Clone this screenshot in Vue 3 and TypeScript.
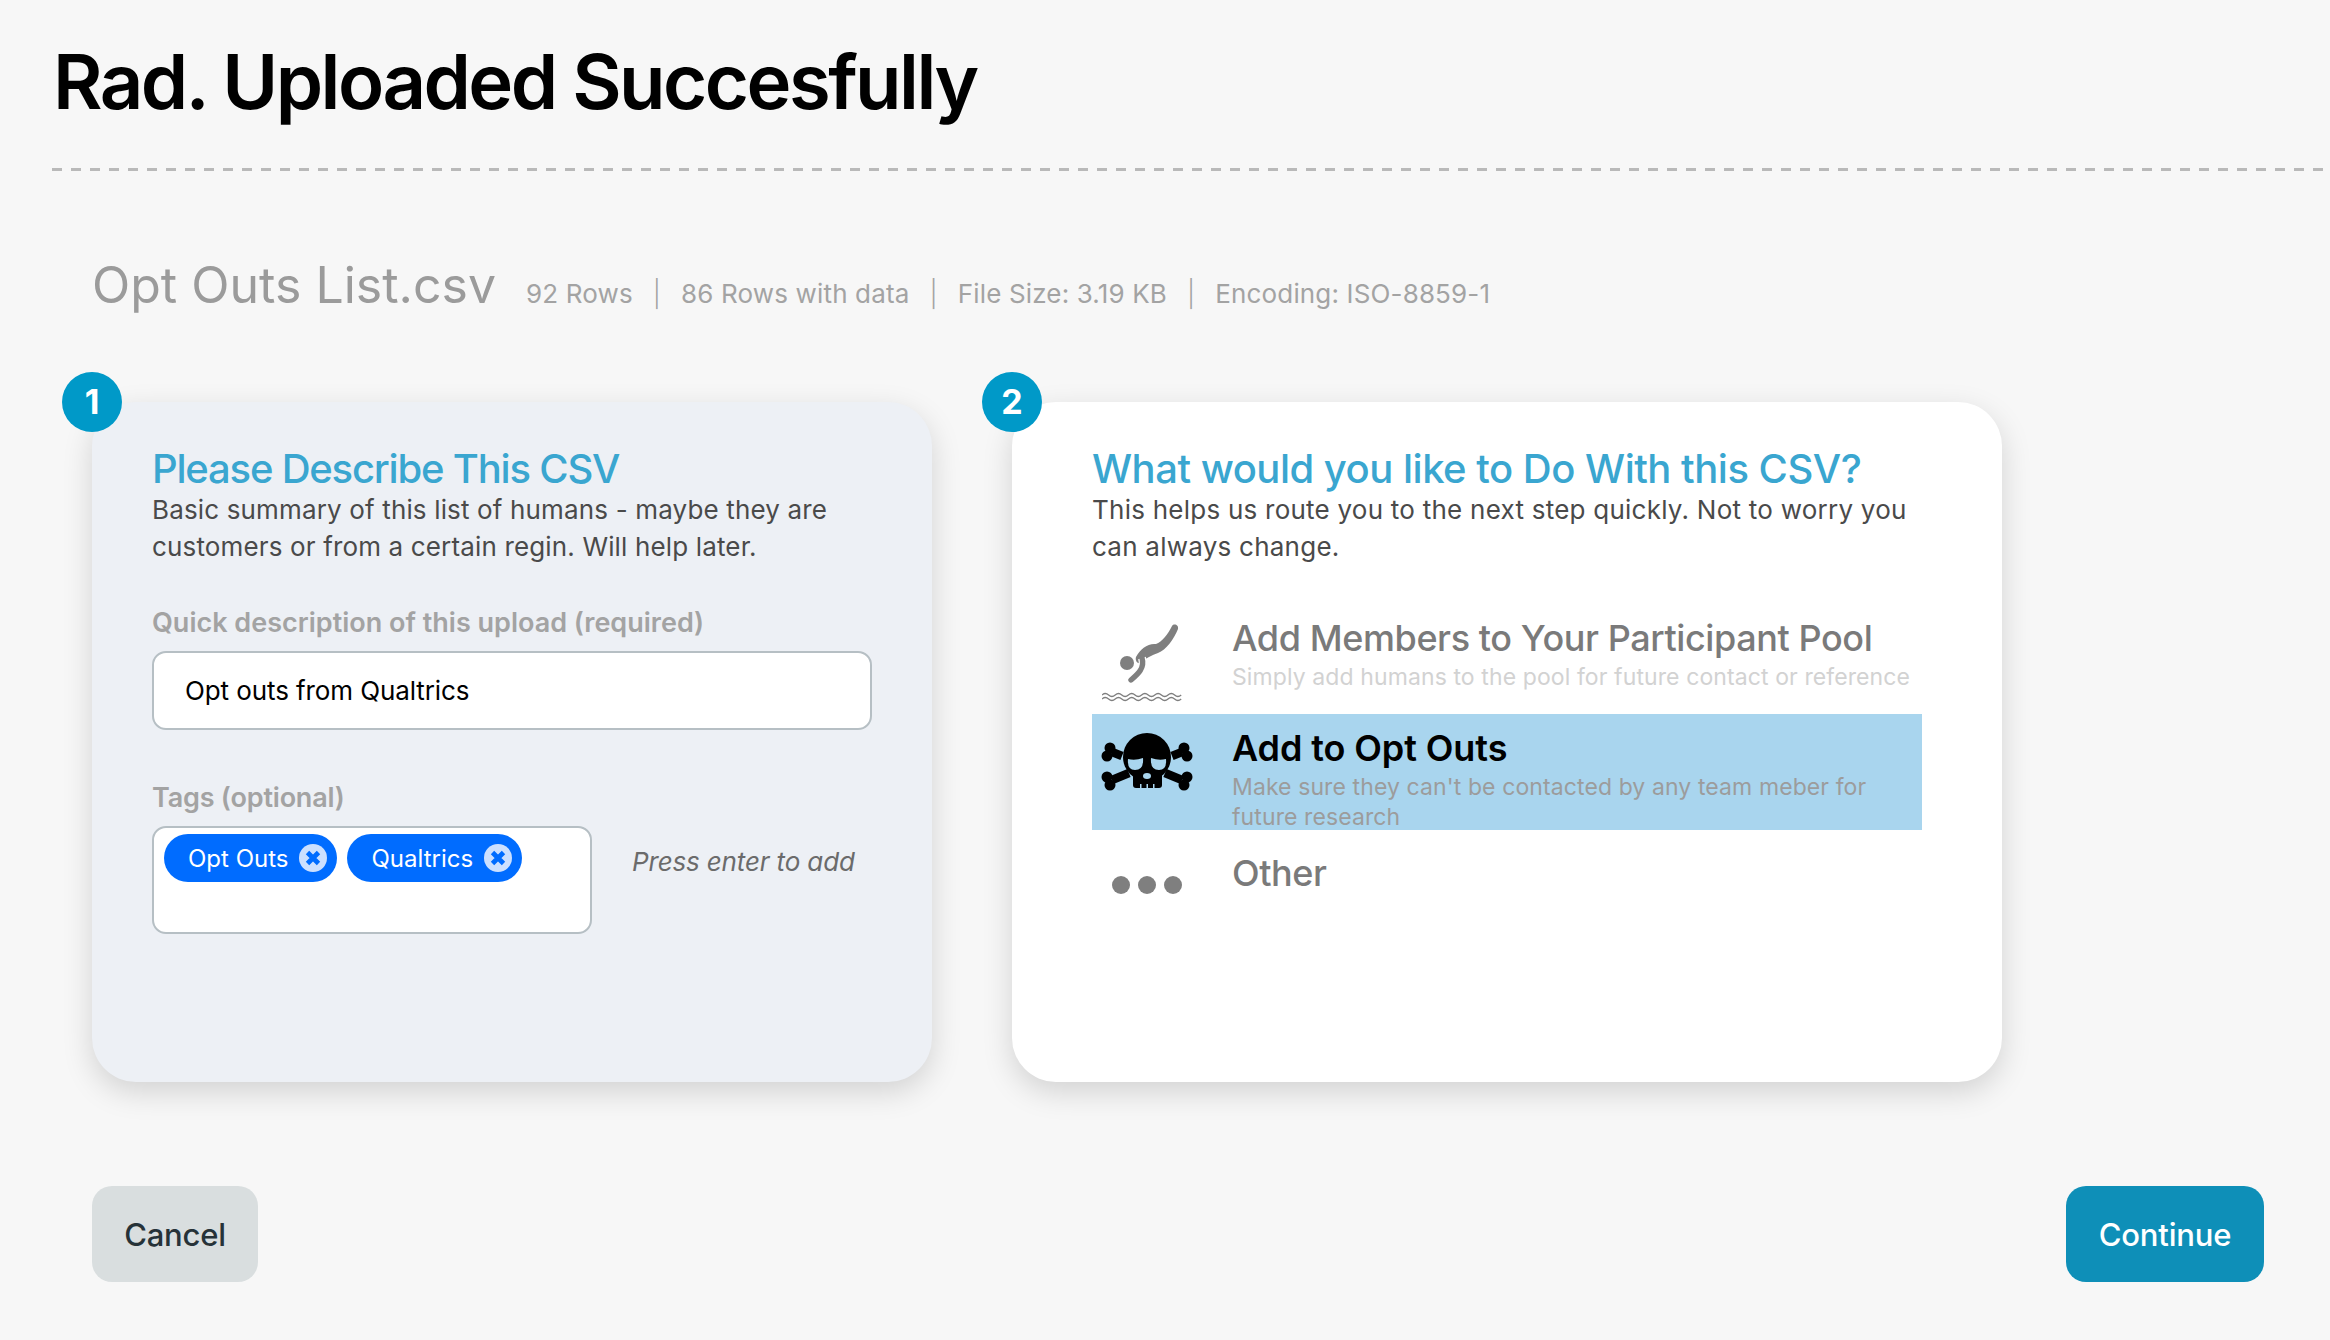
<template>
  <div class="page">
    <h1 class="title">Rad. Uploaded Succesfully</h1>
    <div class="rule"></div>

    <div class="file-row">
      <span class="file-name">Opt Outs List.csv</span>
      <div class="file-meta">
        <template v-for="(item, i) in fileStats" :key="item">
          <span v-if="i > 0" class="sep">|</span>
          <span>{{ item }}</span>
        </template>
      </div>
    </div>

    <div class="cards">
      <section class="card card-left">
        <span class="badge">1</span>
        <h2>Please Describe This CSV</h2>
        <p class="lead">Basic summary of this list of humans - maybe they are customers or from a certain regin. Will help later.</p>

        <label class="field-label">Quick description of this upload (required)</label>
        <input class="text-input" type="text" value="Opt outs from Qualtrics" />

        <label class="field-label tags-label">Tags (optional)</label>
        <div class="tags-row">
          <div class="tags-box">
            <span v-for="tag in tags" :key="tag" class="tag">
              {{ tag }}
              <svg class="tag-x" viewBox="0 0 28 28">
                <circle cx="14" cy="14" r="14" fill="#cce0ff" />
                <path d="M8.5 8.5l11 11M19.500 8.500l-11 11" stroke="#006cff" stroke-width="4.800" />
              </svg>
            </span>
          </div>
          <span class="hint">Press enter to add</span>
        </div>
      </section>

      <section class="card card-right">
        <span class="badge">2</span>
        <h2>What would you like to Do With this CSV?</h2>
        <p class="lead">This helps us route you to the next step quickly. Not to worry you can always change.</p>

        <div class="options">
          <div class="option option-pool">
            <div class="option-icon">
              <svg width="80" height="80" viewBox="0 0 80 80">
                <circle cx="25" cy="41" r="7" fill="#7f7f7f" />
                <path d="M70 4C66 12 60 20 54 22C46 21 38 27 34 35C33 38 35 42 38 41C44 36 50 33 56 31C64 28 72 17 76 7C77 3 72 1 70 4Z" fill="#7f7f7f" />
                <path d="M40 36C43 46 36 52 29 58" fill="none" stroke="#fff" stroke-width="8" />
                <path d="M40 36C43 46 36 52 29 58" fill="none" stroke="#7f7f7f" stroke-width="5.4" stroke-linecap="round" />
                <path d="M0 73q3.300-3 6.600 0t6.600 0t6.600 0t6.600 0t6.600 0t6.600 0t6.600 0t6.600 0t6.600 0t6.600 0t6.600 0t6.600 0" fill="none" stroke="#7f7f7f" stroke-width="1.300" />
                <path d="M0 77q3.300-3 6.600 0t6.600 0t6.600 0t6.600 0t6.600 0t6.600 0t6.600 0t6.600 0t6.600 0t6.600 0t6.600 0t6.600 0" fill="none" stroke="#7f7f7f" stroke-width="1.300" />
              </svg>
            </div>
            <div class="option-text">
              <div class="option-title">Add Members to Your Participant Pool</div>
              <div class="option-sub">Simply add humans to the pool for future contact or reference</div>
            </div>
          </div>

          <div class="option option-active">
            <div class="option-icon">
              <svg width="94" height="64" viewBox="0 0 94 64">
                <g fill="#000">
                  <circle cx="47" cy="27" r="24" />
                  <path d="M33 42H62V55Q62 58 59 58H36Q33 58 33 55Z" />
                  <path d="M12 22L22 26M12 50L29 43" stroke="#000" stroke-width="8.500" />
                  <circle cx="10" cy="18" r="5.500" /><circle cx="7" cy="26" r="5.500" />
                  <circle cx="7" cy="47" r="5.500" /><circle cx="10" cy="55" r="5.500" />
                  <path d="M82 22L72 26M82 50L65 43" stroke="#000" stroke-width="8.500" />
                  <circle cx="84" cy="18" r="5.500" /><circle cx="87" cy="26" r="5.500" />
                  <circle cx="87" cy="47" r="5.500" /><circle cx="84" cy="55" r="5.500" />
                </g>
                <g fill="#a9d5ee">
                  <path d="M28 29Q35 31 43 28Q44 40 35 40Q27 40 28 29Z" />
                  <path d="M66 29Q59 31 51 28Q50 40 59 40Q67 40 66 29Z" />
                  <ellipse cx="47" cy="46" rx="4" ry="3" />
                  <path d="M40 54h1.500v4H40zM46.500 54h1.500v4h-1.500zM53 54h1.500v4H53z" />
                </g>
              </svg>
            </div>
            <div class="option-text">
              <div class="option-title">Add to Opt Outs</div>
              <div class="option-sub">Make sure they can't be contacted by any team meber for future research</div>
            </div>
          </div>

          <div class="option option-other">
            <div class="option-icon dots">
              <i></i><i></i><i></i>
            </div>
            <div class="option-text">
              <div class="option-title">Other</div>
            </div>
          </div>
        </div>
      </section>
    </div>

    <div class="actions">
      <button class="btn btn-cancel">Cancel</button>
      <button class="btn btn-continue">Continue</button>
    </div>
  </div>
</template>

<script setup lang="ts">
const fileStats: string[] = ['92 Rows', '86 Rows with data', 'File Size: 3.19 KB', 'Encoding: ISO-8859-1']
const tags: string[] = ['Opt Outs', 'Qualtrics']
</script>

<style>
html, body {
  margin: 0;
  background: #f7f7f7;
}
</style>

<style scoped>
.page {
  width: 2330px;
  height: 1340px;
  overflow: hidden;
  box-sizing: border-box;
  font-family: Inter, "Liberation Sans", sans-serif;
  background: #f7f7f7;
  padding-top: 36px;
}

.title {
  margin: 0 0 0 53px;
  font-size: 76px;
  line-height: 90px;
  font-weight: 600;
  letter-spacing: -2.55px;
  color: #000;
}

.rule {
  margin: 42px 0 0 52px;
  height: 3px;
  background: repeating-linear-gradient(90deg, #b9b9b9 0 10px, transparent 10px 19px);
}

.file-row {
  display: flex;
  align-items: baseline;
  margin: 84px 0 0 92px;
  height: 60px;
  color: #9b9b9b;
}

.file-name {
  font-size: 50px;
  line-height: 60px;
}

.file-meta {
  display: flex;
  gap: 20px;
  margin-left: 30px;
  font-size: 26px;
  letter-spacing: 0.15px;
  color: #a3a3a3;
}

.sep {
  font-weight: 300;
}

.cards {
  display: flex;
  gap: 80px;
  margin: 87px 0 0 92px;
}

.card {
  position: relative;
  box-sizing: border-box;
  height: 680px;
  border-radius: 44px;
  box-shadow: 0 10px 30px rgba(0, 0, 0, 0.15);
  padding-top: 45px;
}

.card-left {
  width: 840px;
  background: #edf0f5;
  padding-left: 60px;
  padding-right: 60px;
}

.card-right {
  width: 990px;
  background: #fff;
  padding-left: 80px;
  padding-right: 80px;
}

.badge {
  position: absolute;
  left: -30px;
  top: -30px;
  width: 60px;
  height: 60px;
  border-radius: 50%;
  background: #0099c8;
  color: #fff;
  font-size: 34px;
  font-weight: 700;
  line-height: 60px;
  text-align: center;
}

h2 {
  margin: 0;
  font-size: 40px;
  line-height: 44px;
  font-weight: 500;
  letter-spacing: -0.5px;
  color: #3aa6d0;
}

.card-left h2 {
  letter-spacing: -1.2px;
}

.lead {
  margin: 0;
  font-size: 26px;
  line-height: 37px;
  letter-spacing: 0.15px;
  color: #4a4a4a;
}

.card-right .lead {
  letter-spacing: 0.24px;
}

.field-label {
  display: block;
  margin-top: 40px;
  font-size: 27px;
  line-height: 36px;
  font-weight: 600;
  color: #a3a3a3;
}

.text-input {
  display: block;
  box-sizing: border-box;
  width: 720px;
  height: 79px;
  margin-top: 10px;
  padding: 0 31px;
  border: 2px solid #b6bfc4;
  border-radius: 14px;
  background: #fff;
  font: 400 26px Inter, sans-serif;
  letter-spacing: -0.1px;
  color: #000;
  outline: none;
}

.tags-label {
  margin-top: 50px;
  letter-spacing: -0.2px;
}

.tags-row {
  display: flex;
  align-items: flex-start;
  margin-top: 10px;
}

.tags-box {
  box-sizing: border-box;
  width: 440px;
  height: 108px;
  padding: 6px 10px;
  display: flex;
  align-items: flex-start;
  gap: 10px;
  border: 2px solid #b6bfc4;
  border-radius: 14px;
  background: #fff;
}

.tag {
  display: flex;
  align-items: center;
  gap: 11px;
  height: 48px;
  padding: 0 10px 0 24px;
  border-radius: 24px;
  background: #006cff;
  color: #fff;
  font-size: 24px;
}

.tag-x {
  width: 28px;
  height: 28px;
}

.hint {
  margin: 18px 0 0 40px;
  font-size: 26px;
  line-height: 36px;
  font-style: italic;
  letter-spacing: -0.15px;
  color: #6b6b6b;
}

.options {
  margin-top: 51px;
}

.option {
  display: flex;
}

.option-icon {
  flex: none;
  width: 110px;
  margin-right: 30px;
  display: flex;
  justify-content: center;
}

.option-pool {
  height: 98px;
}

.option-pool .option-icon {
  box-sizing: border-box;
  justify-content: flex-start;
  padding: 6px 0 0 10px;
}

.option-active {
  height: 116px;
  background: #a9d5ee;
}

.option-active .option-icon {
  padding-top: 16px;
  box-sizing: border-box;
}

.option-other {
  margin-top: 21px;
}

.option-title {
  font-size: 36px;
  line-height: 44px;
  font-weight: 500;
  letter-spacing: -0.4px;
  color: #7a7a7a;
}

.option-sub {
  margin-top: 2px;
  font-size: 23px;
  line-height: 30px;
  letter-spacing: 0.1px;
  color: #d2d2d2;
}

.option-active .option-title {
  color: #000;
  font-weight: 600;
  letter-spacing: -0.1px;
  padding-top: 12px;
}

.option-active .option-sub {
  color: #9c9c9c;
}

.dots {
  gap: 8px;
  align-items: center;
  height: 68px;
}

.dots i {
  width: 18px;
  height: 18px;
  border-radius: 50%;
  background: #7f7f7f;
}

.actions {
  display: flex;
  justify-content: space-between;
  margin: 104px 66px 0 92px;
}

.btn {
  height: 96px;
  border: none;
  border-radius: 20px;
  font-family: inherit;
  font-size: 31px;
  font-weight: 500;
  letter-spacing: -0.2px;
}

.btn-cancel {
  width: 166px;
  padding: 0;
  background: #d9dedf;
  color: #263238;
}

.btn-continue {
  width: 198px;
  padding: 0;
  background: #0e8fb8;
  color: #fff;
}
</style>
